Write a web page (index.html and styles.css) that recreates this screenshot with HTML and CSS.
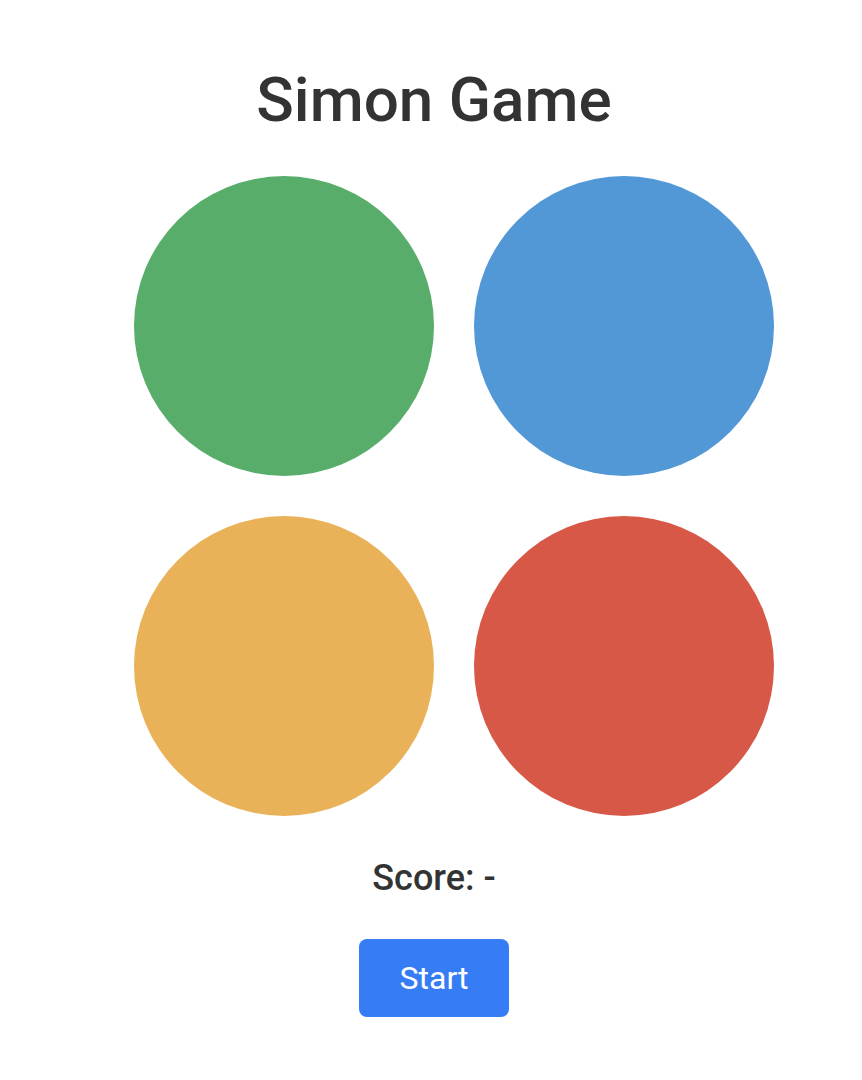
FILE: index.html
```html
<!DOCTYPE html>
<html>
<head>
<meta charset="utf-8">
<link rel="stylesheet" href="styles.css">
</head>
<body>
<main class="app">
  <h1 class="title">Simon Game</h1>
  <div class="board">
    <div class="pad pad-green"></div>
    <div class="pad pad-blue"></div>
    <div class="pad pad-yellow"></div>
    <div class="pad pad-red"></div>
  </div>
  <p class="score">Score: -</p>
  <button class="start">Start</button>
</main>
</body>
</html>
```
FILE: styles.css
```css
html, body {
  margin: 0;
  padding: 0;
  background: #ffffff;
}
.app {
  display: flex;
  flex-direction: column;
  align-items: center;
  padding-left: 6px;
  font-family: Roboto, "Liberation Sans", sans-serif;
  color: #333333;
}
.title {
  margin: 64px 0 0;
  font-size: 62px;
  font-weight: 500;
  line-height: 72px;
}
.board {
  margin-top: 40px;
  display: grid;
  grid-template-columns: repeat(2, 300px);
  gap: 40px;
  padding-left: 40px;
}
.pad {
  width: 300px;
  height: 300px;
  border-radius: 50%;
}
.pad-green { background: #57ad69; }
.pad-blue { background: #5297d6; }
.pad-yellow { background: #eab258; }
.pad-red { background: #d75846; }
.score {
  margin: 40px 0 0;
  font-size: 36px;
  font-weight: 500;
  line-height: 44px;
}
.start {
  margin-top: 39px;
  width: 150px;
  height: 78px;
  border: none;
  border-radius: 8px;
  background: #367cf5;
  color: #ffffff;
  font-family: Roboto, "Liberation Sans", sans-serif;
  font-size: 32px;
  cursor: pointer;
}
```
